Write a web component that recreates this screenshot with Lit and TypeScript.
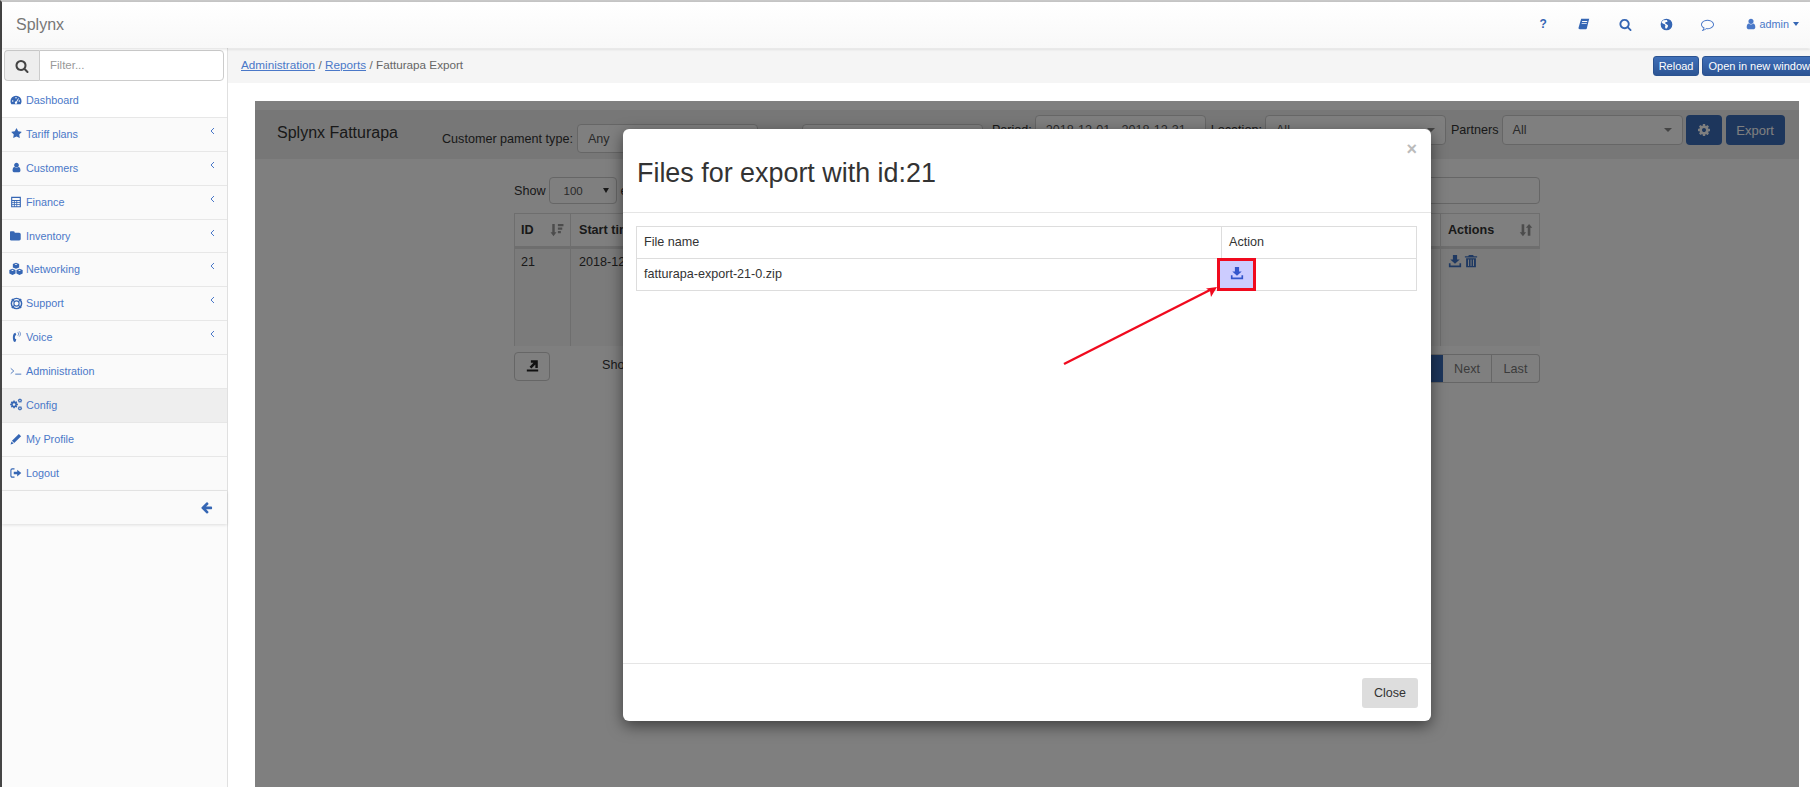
import { LitElement, html, css, svg, nothing } from "lit";
import { customElement } from "lit/decorators.js";

// font-awesome style glyphs, 1792 grid unless the icon says otherwise
const FA: Record<string, string> = {
  search:
    "M1216 832q0-185-131.5-316.5t-316.5-131.5-316.5 131.5-131.5 316.5 131.5 316.5 316.5 131.5 316.5-131.5 131.5-316.5zm512 832q0 52-38 90t-90 38q-54 0-90-38l-343-342q-179 124-399 124-143 0-273.5-55.5t-225-150-150-225-55.5-273.5 55.5-273.5 150-225 225-150 273.5-55.5 273.5 55.5 225 150 150 225 55.5 273.5q0 220-124 399l343 343q37 37 37 90z",
  star: "M1728 647q0 22-26 48l-363 354 86 500q1 7 1 20 0 21-10.5 35.5t-30.5 14.5q-19 0-40-12l-449-236-449 236q-22 12-40 12-21 0-31.5-14.5t-10.5-35.5q0-6 2-20l86-500-364-354q-25-27-25-48 0-37 56-46l502-73 225-455q19-41 49-41t49 41l225 455 502 73q56 9 56 46z",
  user: "M1536 1399q0 109-62.5 187t-150.5 78h-854q-88 0-150.5-78t-62.5-187q0-85 8.5-160.5t31.5-152 58.5-131 94-89 134.5-34.5q131 128 313 128t313-128q76 0 134.5 34.5t94 89 58.5 131 31.5 152 8.5 160.5zm-256-887q0 159-112.5 271.5t-271.5 112.5-271.5-112.5-112.5-271.5 112.5-271.5 271.5-112.5 271.5 112.5 112.5 271.5z",
  folder:
    "M1600 648v704q0 92-66 158t-158 66h-1216q-92 0-158-66t-66-158v-960q0-92 66-158t158-66h320q92 0 158 66t66 158v32h672q92 0 158 66t66 158z",
  cog: "M1152 896q0-106-75-181t-181-75-181 75-75 181 75 181 181 75 181-75 75-181zm512-109v222q0 12-8 23t-20 13l-185 28q-19 54-39 91 35 50 107 138 10 12 10 25t-9 23q-27 37-99 108t-94 71q-12 0-26-9l-138-108q-44 23-91 38-16 136-29 186-7 28-36 28h-222q-14 0-24.5-8.5t-11.5-21.5l-28-184q-49-16-90-37l-141 107q-10 9-25 9-14 0-25-11-126-114-165-168-7-10-7-23 0-12 8-23 15-21 51-66.5t54-70.5q-27-50-41-99l-183-27q-13-2-21-12.5t-8-23.5v-222q0-12 8-23t19-13l186-28q14-46 39-92-40-57-107-138-10-12-10-24 0-10 9-23 26-36 98.5-107.5t94.5-71.5q13 0 26 10l138 107q44-23 91-38 16-136 29-186 7-28 36-28h222q14 0 24.5 8.5t11.5 21.5l28 184q49 16 90 37l142-107q9-9 24-9 13 0 25 10 129 119 165 170 7 8 7 22 0 12-8 23-15 21-51 66.5t-54 70.5q26 50 41 98l183 28q13 2 21 12.5t8 23.5z",
  comment:
    "M896 384q-204 0-381.5 69.5t-282 187.5-104.5 255q0 112 71.5 213.5t201.5 175.5l87 50-27 96q-24 91-70 172 152-63 275-171l43-38 57 6q69 8 130 8 204 0 381.5-69.5t282-187.5 104.5-255-104.5-255-282-187.5-381.5-69.5zm896 512q0 174-120 321.5t-326 233-450 85.5q-70 0-145-8-198 175-460 242-49 14-114 22h-5q-15 0-27-10.5t-16-27.5v-1q-3-4-.5-12t2-10 4.5-9.5l6-9 7-8.5 8-9q7-8 31-34.5t34.5-38 31-39.5 32.5-51 27-59 26-76q-157-89-247.5-220t-90.5-281q0-174 120-321.5t326-233 450-85.5 450 85.5 326 233 120 321.5z",
  back: "M1664 896v128q0 53-32.5 90.5t-84.5 37.5h-704l293 294q38 36 38 90t-38 90l-75 76q-37 37-90 37-52 0-91-37l-651-652q-37-37-37-90 0-52 37-91l651-650q38-38 91-38 52 0 90 38l75 74q38 38 38 91t-38 91l-293 293h704q52 0 84.5 37.5t32.5 90.5z",
};

const fa = (name: string, size: number) => html`<svg
  width=${size}
  height=${size}
  viewBox="0 0 1792 1792"
  fill="currentColor"
>
  <path d=${FA[name]}></path>
</svg>`;

const ico = (size: number, body: unknown) => html`<svg
  width=${size}
  height=${size}
  viewBox="0 0 16 16"
  fill="currentColor"
>
  ${body}
</svg>`;

const ICONS: Record<string, () => unknown> = {
  dashboard: () =>
    ico(
      12,
      svg`<path fill-rule="evenodd" d="M8 2.2A7.4 7.4 0 0 0 .6 9.6c0 1.5.4 2.8 1.2 3.9h12.4c.8-1.1 1.2-2.4 1.2-3.9A7.4 7.4 0 0 0 8 2.2zM8 4a1 1 0 1 1 0 2 1 1 0 0 1 0-2zM3.6 8.3a1 1 0 1 1 0 2 1 1 0 0 1 0-2zm8.8 0a1 1 0 1 1 0 2 1 1 0 0 1 0-2zM11 5.5l.9.6-2.6 4.4a1.6 1.6 0 1 1-1-.6z"/>`
    ),
  star: () => fa("star", 11),
  user: () => fa("user", 11),
  calc: () =>
    ico(
      12,
      svg`<path fill-rule="evenodd" d="M1.5 1h13v14h-13zM3 2.5v2.8h10V2.5zM3 6.6v1.6h2.2V6.6zm3.3 0v1.6h2.2V6.6zm3.3 0v1.6H13V6.6zM3 9.3v1.6h2.2V9.3zm3.3 0v1.6h2.2V9.3zm3.3 0v1.6H13V9.3zM3 12v1.6h2.2V12zm3.3 0v1.6h2.2V12zm3.3 0v1.6H13V12z"/>`
    ),
  folder: () => fa("folder", 12),
  cubes: () =>
    ico(
      14,
      svg`<path d="M8 .8l3.6 1.5v3.9L8 7.8 4.4 6.2V2.3zM4 7.6l3.5 1.5v4L4 14.8.4 13.1V9.1zM12 7.6l3.6 1.5v4L12 14.8l-3.5-1.7v-4z"/><path fill="#fafafa" d="M8 2.1l1.6.7L8 3.5l-1.6-.7zM4 8.9l1.6.7-1.6.7-1.6-.7zM12 8.9l1.6.7-1.6.7-1.6-.7z"/>`
    ),
  ring: () =>
    ico(
      13,
      svg`<circle cx="8" cy="8" r="6.3" fill="none" stroke="currentColor" stroke-width="1.8"/><circle cx="8" cy="8" r="3.2" fill="none" stroke="currentColor" stroke-width="1.4"/><path d="M3 1.8l3 3.4-1 1-3.4-3zM13 1.8l-3 3.4 1 1 3.4-3zM3 14.2l3-3.4-1-1-3.4 3zM13 14.2l-3-3.4 1-1 3.4 3z"/>`
    ),
  voice: () =>
    ico(
      12,
      svg`<path d="M7.2 2.4L8.4 5 7 6.2c-.7 1.4-.7 2.7-.2 4.1l1.6.8-.8 2.9-1.6.8C3.4 12.8 3.2 6 5.2 3.2z"/><path d="M10.4 1.6c1.4 1.3 1.4 3.4 0 4.8" fill="none" stroke="currentColor" stroke-width=".9"/><path d="M12.4.6c2 2 2 4.8 0 6.8" fill="none" stroke="currentColor" stroke-width=".9"/>`
    ),
  terminal: () =>
    ico(
      12,
      svg`<path d="M1 4.5l4 3.5-4 3.5M7 12.2h8" fill="none" stroke="currentColor" stroke-width="1.1"/>`
    ),
  cogs: () =>
    ico(
      13,
      svg`<g transform="translate(-.6 2.4) scale(.0062)"><path d=${FA.cog}/></g><g transform="translate(9.2 .2) scale(.0034)"><path d=${FA.cog}/></g><g transform="translate(9.2 9.6) scale(.0034)"><path d=${FA.cog}/></g>`
    ),
  pencil: () =>
    ico(
      12,
      svg`<path d="M11.8 1.2l3 3L5.6 13.4l-3-3zM2 11.2l2.8 2.8-4 1.2z"/>`
    ),
  logout: () =>
    ico(
      12,
      svg`<path d="M6 2.5H3A1.8 1.8 0 0 0 1.2 4.3v7.4A1.8 1.8 0 0 0 3 13.5h3" fill="none" stroke="currentColor" stroke-width="1.5"/><path d="M5 6.4h4.6V3.5L15 8l-5.4 4.5V9.6H5z"/>`
    ),
};

const MENU: { label: string; icon: string; sub?: boolean; active?: boolean; top?: boolean }[] = [
  { label: "Dashboard", icon: "dashboard", top: true },
  { label: "Tariff plans", icon: "star", sub: true },
  { label: "Customers", icon: "user", sub: true },
  { label: "Finance", icon: "calc", sub: true },
  { label: "Inventory", icon: "folder", sub: true },
  { label: "Networking", icon: "cubes", sub: true },
  { label: "Support", icon: "ring", sub: true },
  { label: "Voice", icon: "voice", sub: true },
  { label: "Administration", icon: "terminal" },
  { label: "Config", icon: "cogs", active: true },
  { label: "My Profile", icon: "pencil" },
  { label: "Logout", icon: "logout" },
];

const downloadIcon = (size: number) =>
  ico(
    size,
    svg`<path d="M5.6 1h4.8v5.2h3L8 11.2 2.6 6.2h3z"/><path d="M1 10.5h1.9v2.5h10.2v-2.5H15V15H1z"/>`
  );

const trashIcon = (size: number) =>
  ico(
    size,
    svg`<path d="M5.6 1h4.8l.8 1.6H15v1.3H1V2.6h3.8z"/><path fill-rule="evenodd" d="M2.4 4.8h11.2V15H2.4zM4.6 6.2v7.4h1.1V6.2zm2.9 0v7.4h1.1V6.2zm2.8 0v7.4h1.1V6.2z"/>`
  );

const sortIcon = (size: number, both: boolean) =>
  ico(
    size,
    both
      ? svg`<path d="M3 1.5h3v9h2.2L4.5 15 .8 10.5H3zM10 14.5h3v-9h2.2L11.5 1 7.8 5.5H10z"/>`
      : svg`<path d="M2.6 1h2.8v9.5h2L4 15 .6 10.5h2zM9 1h6.4v2.6H9zM9 5h5v2.6H9zM9 9h3.4v2.6H9z"/>`
  );

@customElement("app-root")
export class AppRoot extends LitElement {
  static styles = css`
    :host {
      display: block;
      width: 1810px;
      height: 787px;
      overflow: hidden;
      font-family: "Liberation Sans", Arial, sans-serif;
      color: #333;
      background: #fff;
    }

    .frame {
      height: 787px;
      display: flex;
      flex-direction: column;
      border-left: 2px solid #454545;
      border-top: 2px solid #c9c9c9;
      box-sizing: border-box;
    }

    .topbar {
      height: 46px;
      flex: none;
      display: flex;
      align-items: center;
      padding-left: 14px;
      background: linear-gradient(#fff, #f8f8f8);
      box-shadow: 0 1px 3px rgb(0 0 0 / 0.14);
      position: relative;
      z-index: 2;
    }

    .brand {
      font-size: 16px;
      color: #777;
    }

    .topnav {
      margin-left: auto;
      display: flex;
      align-items: center;
      color: #3566b4;
      height: 100%;
      padding-bottom: 2px;
      box-sizing: border-box;
    }

    .topnav .slot {
      width: 41px;
      display: flex;
      justify-content: center;
    }

    .help {
      font-size: 12px;
      font-weight: bold;
    }

    .admin {
      display: flex;
      align-items: center;
      gap: 3px;
      margin-left: 17px;
      margin-right: 11px;
      font-size: 10.8px;
      color: #4a78c8;
    }

    .caret {
      width: 0;
      height: 0;
      margin-left: 1px;
      border: 3.5px solid transparent;
      border-top: 4px solid #3566b4;
      border-bottom: 0;
    }

    .body {
      flex: 1;
      display: flex;
      min-height: 0;
    }

    .sidebar {
      width: 226px;
      flex: none;
      box-sizing: border-box;
      border-right: 1px solid #e0e0e0;
      background: #fbfbfb;
    }

    .filter {
      display: flex;
      height: 31px;
      padding: 2px 2px 3px 2px;
      background: #fff;
    }

    .filter .addon {
      width: 35px;
      box-sizing: border-box;
      display: flex;
      align-items: center;
      justify-content: center;
      background: #eee;
      color: #444;
      border: 1px solid #ccc;
      border-right: 0;
      border-radius: 4px 0 0 4px;
    }

    .filter .input {
      width: 185px;
      box-sizing: border-box;
      border: 1px solid #ccc;
      border-radius: 0 4px 4px 0;
      background: #fff;
      color: #999;
      font-size: 11.5px;
      line-height: 28px;
      padding-left: 10px;
    }

    .item {
      height: 33.9px;
      box-sizing: border-box;
      border-bottom: 1px solid #e7e7e7;
      padding-bottom: 1px;
      display: flex;
      align-items: center;
      font-size: 10.8px;
      color: #4a78c8;
      background: #fafafa;
    }

    .item.top {
      background: #fff;
    }

    .item.active {
      background: #eee;
    }

    .item .icon {
      width: 20px;
      padding-left: 4px;
      display: flex;
      justify-content: center;
      color: #3566b4;
      flex: none;
    }

    .item .chev {
      margin-left: auto;
      margin-right: 12px;
      margin-bottom: 6px;
      display: flex;
    }

    .toggle {
      height: 33px;
      display: flex;
      align-items: center;
      justify-content: flex-end;
      padding-right: 14px;
      box-sizing: border-box;
      background: #fafafa;
      color: #3566b4;
      box-shadow: 0 1px 3px rgb(0 0 0 / 0.12);
    }

    .content {
      flex: 1;
      min-width: 0;
      display: flex;
      flex-direction: column;
    }

    .crumbs {
      height: 34px;
      flex: none;
      margin-top: 1px;
      background: #f5f5f5;
      display: flex;
      align-items: center;
      padding-left: 13px;
      padding-bottom: 3px;
      box-sizing: border-box;
      font-size: 11.7px;
      color: #666;
    }

    .crumbs a {
      color: #4a78c8;
      text-decoration: underline;
    }

    .crumbs .sep {
      margin: 0 3.4px;
    }

    .crumbs .actions {
      margin-left: auto;
      margin-right: -6px;
      display: flex;
      gap: 3px;
      padding-top: 3px;
    }

    .crumbs button {
      height: 20px;
      border: 1px solid #2a5290;
      border-radius: 3px;
      background: linear-gradient(#3f6fb8, #2c5494);
      color: #fff;
      font: 11px "Liberation Sans", Arial, sans-serif;
      padding: 0 5px;
    }

    .page {
      flex: 1;
      padding: 18px 11px 0 27px;
      min-height: 0;
    }

    .panel {
      position: relative;
      height: 686px;
      background: #fff;
      padding-top: 9px;
      box-sizing: border-box;
      font-size: 12.6px;
    }

    .scrim {
      position: absolute;
      inset: 0;
      background: rgb(0 0 0 / 0.5);
    }

    .boxhead {
      height: 49px;
      background: #eee;
      display: flex;
      align-items: flex-start;
      box-sizing: border-box;
      padding-left: 22px;
    }

    .boxhead .title {
      font-size: 16px;
      width: 165px;
      flex: none;
      margin-top: 14px;
    }

    .fgroup {
      display: flex;
      align-items: center;
      gap: 4px;
      flex: none;
    }

    .fgroup.tight {
      gap: 3px;
    }

    .select {
      box-sizing: border-box;
      height: 30px;
      border: 1px solid #ccc;
      border-radius: 4px;
      background: #fff;
      display: flex;
      align-items: center;
      padding: 0 10px;
      color: #555;
      position: relative;
    }

    .select .arrow {
      margin-left: auto;
      width: 0;
      height: 0;
      border: 4px solid transparent;
      border-top: 4px solid #888;
      border-bottom: 0;
    }

    .low {
      margin-top: 14px;
    }

    .low .select {
      height: 29px;
    }

    .high {
      margin-top: 5px;
    }

    .btn {
      box-sizing: border-box;
      height: 30px;
      border-radius: 4px;
      background: #3a6cb8;
      color: #fff;
      display: flex;
      align-items: center;
      justify-content: center;
      font-size: 13px;
    }

    .tablewrap {
      width: 1026px;
      margin-left: 259px;
      padding-top: 18px;
    }

    .len {
      display: flex;
      justify-content: space-between;
      align-items: center;
      height: 27px;
    }

    .len .left {
      display: flex;
      align-items: center;
      gap: 4px;
    }

    .len .select {
      width: 68px;
      height: 27px;
      font-size: 11.5px;
      padding: 0 7px 0 14px;
      margin-left: -1px;
    }

    .len .select .arrow {
      border-top-color: #333;
      border-width: 5px 3.5px 0;
    }

    .search {
      width: 250px;
      height: 27px;
      box-sizing: border-box;
      border: 1px solid #ccc;
      border-radius: 4px;
      background: #fff;
    }

    .grid {
      margin-top: 9px;
      display: grid;
      grid-template-columns: 57px 1fr 99px;
    }

    .th {
      height: 36px;
      box-sizing: border-box;
      border: 1px solid #ddd;
      border-left: 0;
      border-bottom: 3px solid #ddd;
      font-weight: bold;
      display: flex;
      align-items: center;
      justify-content: space-between;
      padding: 0 6px 0 8px;
      color: #333;
    }

    .th:first-child {
      border-left: 1px solid #ddd;
      padding-left: 6px;
    }

    .th:nth-child(3) {
      padding-left: 7px;
    }

    .th svg {
      color: #999;
    }

    .td {
      height: 97px;
      box-sizing: border-box;
      background: #f7f7f7;
      border-right: 1px solid #ddd;
      padding: 6px 8px;
    }

    .td:nth-child(4) {
      border-left: 1px solid #ddd;
      padding-left: 6px;
    }

    .td:last-child {
      border-right: 0;
      display: flex;
      gap: 2px;
      padding: 5px 7px;
      color: #3e72c4;
      align-items: flex-start;
    }

    .foot {
      display: flex;
      align-items: flex-start;
      margin-top: 6px;
    }

    .exportbtn {
      width: 36px;
      height: 29px;
      box-sizing: border-box;
      border: 1px solid #ccc;
      border-radius: 4px;
      background: #fff;
      display: flex;
      align-items: center;
      justify-content: center;
      padding-bottom: 3px;
      color: #222;
    }

    .info {
      margin-left: 52px;
      margin-top: 6px;
    }

    .pager {
      margin-left: auto;
      margin-top: 2px;
      display: flex;
      height: 29px;
      border: 1px solid #ccc;
      border-left: 0;
      border-radius: 0 4px 4px 0;
      box-sizing: border-box;
      background: #fff;
      color: #777;
      align-items: stretch;
    }

    .pager span {
      width: 47px;
      display: flex;
      align-items: center;
      justify-content: center;
    }

    .pager .num {
      background: #3a6cb8;
      color: #fff;
      width: 40px;
    }

    .pager .next {
      width: 48px;
    }

    .pager .last {
      border-left: 1px solid #ccc;
    }

    .modal {
      position: absolute;
      left: 368px;
      top: 28px;
      width: 808px;
      height: 592px;
      box-sizing: border-box;
      background: #fff;
      border-radius: 6px;
      box-shadow: 0 5px 15px rgb(0 0 0 / 0.5);
      display: flex;
      flex-direction: column;
    }

    .m-head {
      height: 84px;
      flex: none;
      box-sizing: border-box;
      border-bottom: 1px solid #e5e5e5;
      display: flex;
      align-items: flex-start;
      justify-content: space-between;
      padding: 0 14px 0 14px;
    }

    .m-head h4 {
      margin: 28px 0 0;
      font-size: 26.9px;
      line-height: 32px;
      font-weight: normal;
      color: #333;
    }

    .m-head .x {
      font-size: 18px;
      font-weight: bold;
      color: #bbb;
      margin-top: 9px;
      line-height: 22px;
    }

    .m-body {
      flex: 1;
      padding: 13px;
      position: relative;
    }

    .ftable {
      display: grid;
      grid-template-columns: 584px 1fr;
      border: 1px solid #ddd;
      border-bottom: 0;
      width: 781px;
      box-sizing: border-box;
      color: #333;
    }

    .ftable div {
      height: 32px;
      box-sizing: border-box;
      border-bottom: 1px solid #ddd;
      padding: 0 7px 2px;
      display: flex;
      align-items: center;
    }

    .ftable .col {
      border-left: 1px solid #ddd;
    }

    .hit {
      position: absolute;
      left: 594px;
      top: 45px;
      width: 39px;
      height: 33px;
      box-sizing: border-box;
      border: 3px solid #f00a1e;
      background: #ccf;
      display: flex;
      align-items: center;
      justify-content: center;
      padding-bottom: 3px;
      color: #3355cc;
    }

    .pointer {
      position: absolute;
      left: 430px;
      top: 60px;
      overflow: visible;
    }

    .m-foot {
      height: 58px;
      flex: none;
      box-sizing: border-box;
      border-top: 1px solid #e5e5e5;
      display: flex;
      align-items: flex-start;
      justify-content: flex-end;
      padding: 14px 13px 0 0;
    }

    .close {
      width: 56px;
      height: 30px;
      border-radius: 3px;
      background: #ddd;
      display: flex;
      align-items: center;
      justify-content: center;
      font-size: 12.5px;
      color: #333;
    }
  `;

  private renderSidebar() {
    return html`<aside class="sidebar">
      <div class="filter">
        <div class="addon">${fa("search", 14)}</div>
        <div class="input">Filter...</div>
      </div>
      ${MENU.map(
        (m) => html`<div class="item ${m.top ? "top" : ""} ${m.active ? "active" : ""}">
          <span class="icon">${ICONS[m.icon]()}</span>
          <span>${m.label}</span>
          ${m.sub
            ? html`<span class="chev"
                ><svg width="5" height="8" viewBox="0 0 5 8">
                  <path d="M4 1L1 4l3 3" fill="none" stroke="#4a78c8" stroke-width="1"></path></svg
              ></span>`
            : nothing}
        </div>`
      )}
      <div class="toggle">${fa("back", 13)}</div>
    </aside>`;
  }

  private renderReport() {
    return html`<div class="boxhead">
        <div class="title">Splynx Fatturapa</div>
        <div class="fgroup low">
          <span>Customer pament type:</span>
          <div class="select" style="width:181px">Any</div>
        </div>
        <div class="fgroup low" style="margin-left:44px">
          <div class="select" style="width:181px"></div>
        </div>
        <div class="fgroup tight high" style="margin-left:9px">
          <span>Period:</span>
          <div class="select" style="width:171px">2018-12-01 - 2018-12-31</div>
        </div>
        <div class="fgroup tight high" style="margin-left:5px">
          <span>Location:</span>
          <div class="select" style="width:181px">All<span class="arrow"></span></div>
        </div>
        <div class="fgroup tight high" style="margin-left:5px">
          <span>Partners</span>
          <div class="select" style="width:181px">All<span class="arrow"></span></div>
        </div>
        <div class="btn high" style="width:36px;margin-left:3px">${fa("cog", 14)}</div>
        <div class="btn high" style="width:59px;margin-left:4px">Export</div>
      </div>
      <div class="tablewrap">
        <div class="len">
          <div class="left">
            <span>Show</span>
            <div class="select">100<span class="arrow"></span></div>
            <span>entries</span>
          </div>
          <div class="search"></div>
        </div>
        <div class="grid">
          <div class="th">ID ${sortIcon(14, false)}</div>
          <div class="th">Start time</div>
          <div class="th">Actions ${sortIcon(14, true)}</div>
          <div class="td">21</div>
          <div class="td">2018-12-01 00:00:00</div>
          <div class="td">${downloadIcon(14)}${trashIcon(14)}</div>
        </div>
        <div class="foot">
          <div class="exportbtn">
            ${ico(
              13,
              svg`<path d="M1 13h14v2.4H1zM6 1.5h8.5V11h-3V6.8L6.6 11.6 4.4 9.4 9.2 4.6H6z"/>`
            )}
          </div>
          <div class="info">Showing 1 to 1 of 1 entries</div>
          <div class="pager">
            <span class="num">1</span>
            <span class="next">Next</span>
            <span class="last">Last</span>
          </div>
        </div>
      </div>`;
  }

  private renderModal() {
    return html`<div class="modal">
      <div class="m-head">
        <h4>Files for export with id:21</h4>
        <span class="x">×</span>
      </div>
      <div class="m-body">
        <div class="ftable">
          <div>File name</div>
          <div class="col">Action</div>
          <div>fatturapa-export-21-0.zip</div>
          <div class="col"></div>
        </div>
        <div class="hit">${downloadIcon(14)}</div>
        <svg class="pointer" width="170" height="100" viewBox="0 0 170 100">
          <path d="M11 91L157 17" stroke="#f00a1e" stroke-width="2.4" fill="none"></path>
          <path d="M164 14L153 15.5 157 18 158 24z" fill="#f00a1e"></path>
        </svg>
      </div>
      <div class="m-foot"><div class="close">Close</div></div>
    </div>`;
  }

  render() {
    return html`<div class="frame">
      <header class="topbar">
        <div class="brand">Splynx</div>
        <nav class="topnav">
          <span class="slot help">?</span>
          <span class="slot"
            >${ico(
              12,
              svg`<path fill-rule="evenodd" d="M4.2 1H15l-.4 1.4-2.8 11.2c-.2.8-.8 1.4-1.8 1.4H2.4C1 15 .4 14 .8 12.8zM5.6 4l-.3 1.2h6.8L12.4 4zM5 6.6l-.3 1.2h6.8l.3-1.2z"/>`
            )}</span
          >
          <span class="slot">${fa("search", 13)}</span>
          <span class="slot"
            >${ico(
              13,
              svg`<path fill-rule="evenodd" d="M8 .8a7.2 7.2 0 1 1 0 14.4A7.2 7.2 0 0 1 8 .8zM4 2.8C3 3.6 2.3 4.6 2 5.8l2 1.4 1.8.4 1 1.8-.8 1.6 1.4 2.4 2.2-2.4.2-2.2L8 7.6 6.2 6.6 7 5l2.2-.2L8.6 2.6z"/>`
            )}</span
          >
          <span class="slot" style="color:#4a78c8">${fa("comment", 13)}</span>
          <span class="admin"
            >${fa("user", 12)}<span>admin</span><span class="caret"></span
          ></span>
        </nav>
      </header>
      <div class="body">
        ${this.renderSidebar()}
        <main class="content">
          <div class="crumbs">
            <a>Administration</a><span class="sep">/</span><a>Reports</a
            ><span class="sep">/</span><span>Fatturapa Export</span>
            <div class="actions">
              <button>Reload</button><button>Open in new window</button>
            </div>
          </div>
          <div class="page">
            <div class="panel">
              ${this.renderReport()}
              <div class="scrim"></div>
              ${this.renderModal()}
            </div>
          </div>
        </main>
      </div>
    </div>`;
  }
}
